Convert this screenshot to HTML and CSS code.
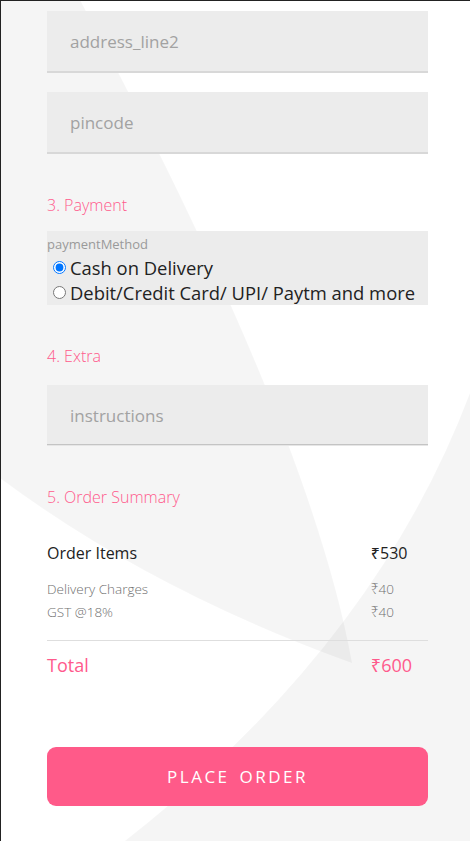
FILE: index.html
```html
<!DOCTYPE html>
<html lang="en">
<head>
<meta charset="utf-8">
<title>Checkout</title>
<link rel="stylesheet" href="styles.css">
</head>
<body>
<div class="page">
  <svg class="bg" viewBox="0 0 470 841" width="470" height="841" aria-hidden="true">
    <path d="M0,0 L80,0 Q310,430 352,663 Q150,590 0,478 Z" fill="rgba(0,0,0,0.04)"/>
    <path d="M470,393 Q375,645 125,841 L470,841 Z" fill="rgba(0,0,0,0.04)"/>
  </svg>
  <main class="content">
    <div class="field field-first"><span class="placeholder">address_line2</span></div>
    <div class="field"><span class="placeholder">pincode</span></div>

    <h2 class="section-title title-payment">3. Payment</h2>
    <div class="radio-group" role="radiogroup">
      <div class="legend">paymentMethod</div>
      <label class="radio-row"><input type="radio" name="pm" checked>Cash on Delivery</label>
      <label class="radio-row"><input type="radio" name="pm">Debit/Credit Card/ UPI/ Paytm and more</label>
    </div>

    <h2 class="section-title title-extra">4. Extra</h2>
    <div class="field field-focus"><span class="placeholder">instructions</span></div>

    <h2 class="section-title title-summary">5. Order Summary</h2>
    <div class="summary">
      <div class="row row-main"><span>Order Items</span><span>₹530</span></div>
      <div class="row row-sub row-first-sub"><span>Delivery Charges</span><span>₹40</span></div>
      <div class="row row-sub"><span>GST @18%</span><span>₹40</span></div>
      <hr class="divider">
      <div class="row row-total"><span>Total</span><span>₹600</span></div>
    </div>

    <button class="place-order" type="button">PLACE ORDER</button>
  </main>
</div>
</body>
</html>
```

FILE: styles.css
```css
* { box-sizing: border-box; }
html, body { margin: 0; padding: 0; background: #fff; }
body { font-family: "Open Sans", "Noto Sans", sans-serif; }

.page {
  position: relative;
  width: 470px;
  height: 841px;
  overflow: hidden;
  border-top: 1px solid #222;
  border-left: 1px solid #222;
}
.bg {
  position: absolute;
  top: -1px;
  left: -1px;
  z-index: 0;
}
.content {
  position: relative;
  z-index: 1;
  width: 381px;
  margin-left: 46px;
  padding-top: 10px;
  display: flex;
  flex-direction: column;
}

.field {
  height: 62px;
  background: #ececec;
  border-bottom: 2px solid #d8d8d8;
  display: flex;
  align-items: center;
  padding-left: 23px;
  margin-top: 19px;
}
.field-first { margin-top: 0; }
.placeholder {
  font-size: 17px;
  color: #a2a2a2;
  line-height: 24px;
  padding-top: 2px;
}
.field-focus {
  height: 60px;
  margin-top: 18px;
  border-bottom: 1px solid #c4c4c4;
  box-shadow: 0 1px 0 #e6e6e6;
}

.section-title {
  margin: 0;
  font-size: 16px;
  font-weight: 300;
  line-height: 22px;
  color: #ff5a8c;
}
.title-payment { margin-top: 40px; }
.title-extra { margin-top: 40px; }
.title-summary { margin-top: 41px; }

.radio-group {
  margin-top: 15px;
  background: #ececec;
  display: flex;
  flex-direction: column;
}
.legend {
  font-size: 13px;
  line-height: 18px;
  color: #9a9a9a;
  padding: 4px 0 2px;
}
.radio-row {
  display: flex;
  align-items: center;
  font-size: 18.4px;
  line-height: 25px;
  color: #222;
  white-space: pre;
}
.radio-row input {
  margin: 0 4px 0 6px;
  width: 13px;
  height: 13px;
}

.summary {
  display: flex;
  flex-direction: column;
  margin-top: 33px;
}
.row {
  display: grid;
  grid-template-columns: 85% 15%;
}
.row-main {
  font-size: 16px;
  line-height: 24px;
  color: #222;
}
.row-sub {
  font-size: 13.5px;
  font-weight: 300;
  line-height: 23px;
  color: #707070;
}
.row-first-sub { margin-top: 13px; }
.divider {
  margin: 16px 0 0;
  border: 0;
  border-top: 1px solid #dedede;
  height: 0;
}
.row-total {
  margin-top: 11px;
  font-size: 18px;
  line-height: 26px;
  color: #ff5a8c;
}

.place-order {
  margin-top: 69px;
  height: 59px;
  width: 100%;
  border: 0;
  border-radius: 9px;
  background: #ff5a89;
  color: #fff;
  font-family: "Open Sans", "Noto Sans", sans-serif;
  font-size: 17px;
  font-weight: 400;
  letter-spacing: 2.5px;
  word-spacing: 3px;
  padding: 0;
}
```
